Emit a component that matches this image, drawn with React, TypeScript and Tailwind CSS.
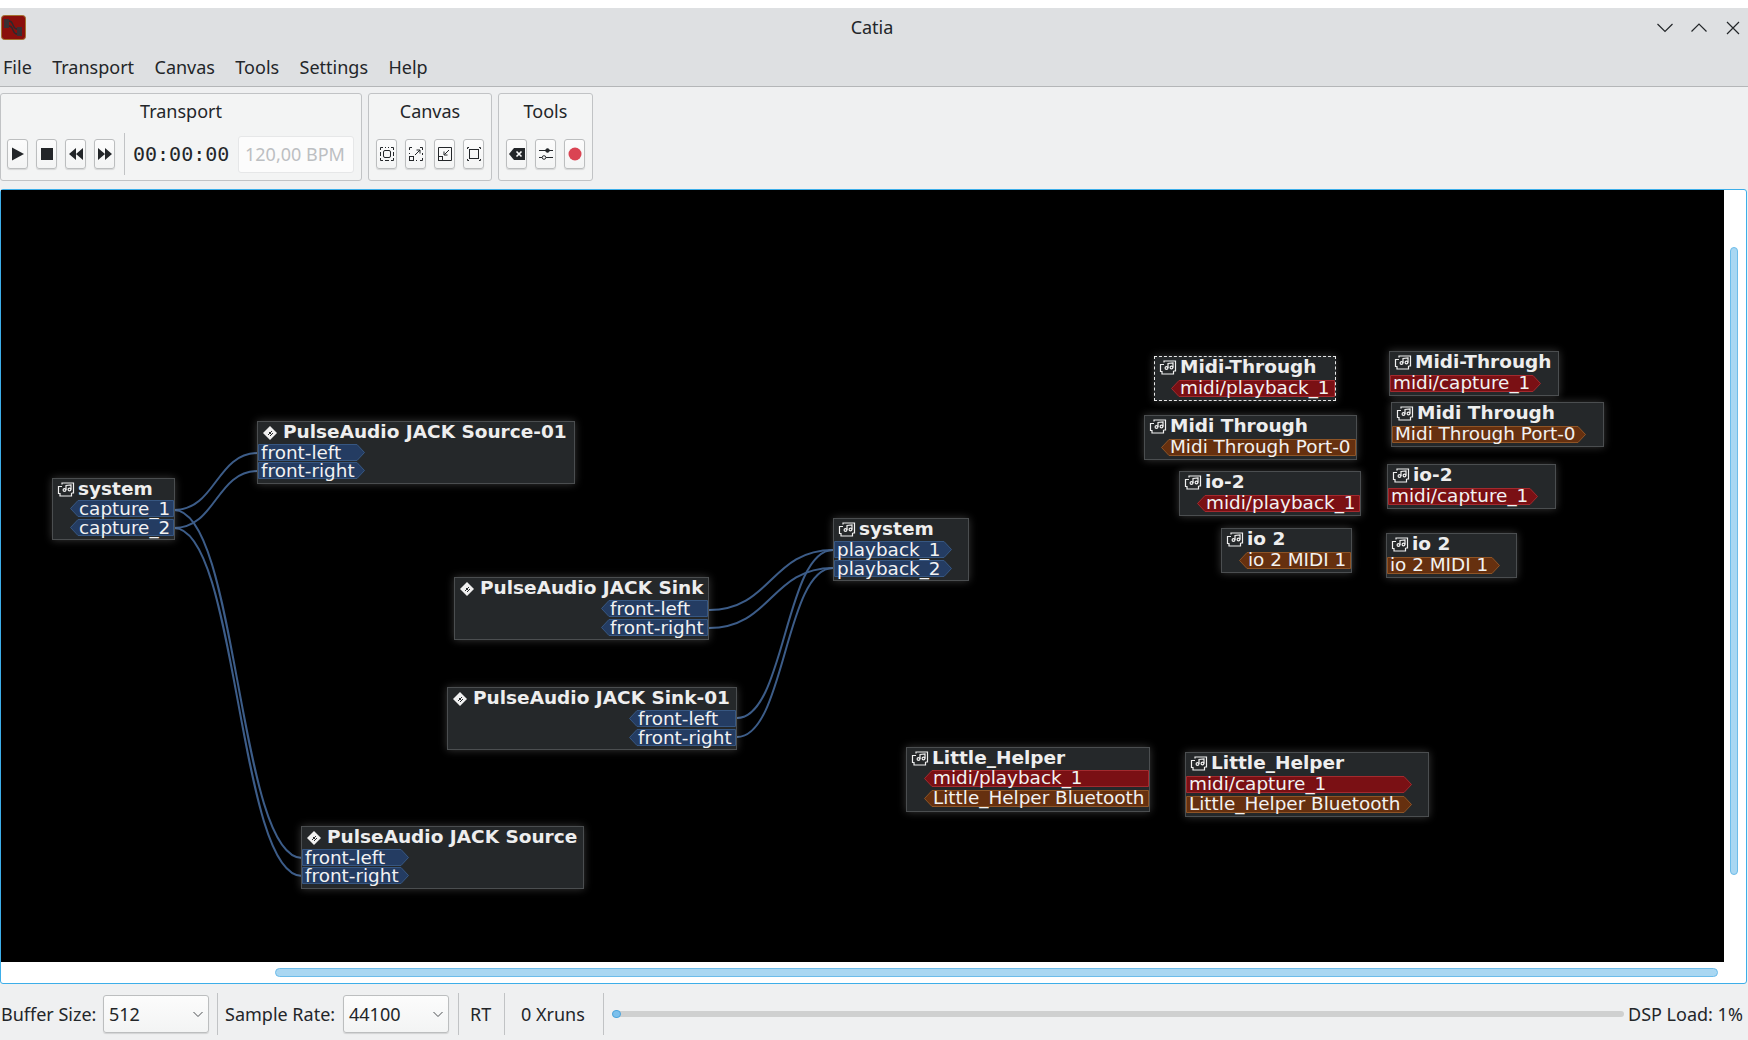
import type { ReactNode } from "react"

const ORIGIN_X = 1
const ORIGIN_Y = 190

type PortKind = "audio" | "midi" | "alsa"

type NodeData = {
  title: string
  x: number
  y: number
  w: number
  h: number
  icon: "card" | "app"
  side: "in" | "out"
  top: number
  gap: number
  selected?: boolean
  ports: { label: string; w: number; kind: PortKind }[]
}

const NODES: NodeData[] = [
  { title: "system", x: 52, y: 478, w: 123, h: 62, icon: "card", side: "out", top: 22, gap: 2, ports: [
    { label: "capture_1", w: 104, kind: "audio" },
    { label: "capture_2", w: 104, kind: "audio" },
  ] },
  { title: "PulseAudio JACK Source-01", x: 257, y: 421, w: 318, h: 63, icon: "app", side: "in", top: 23, gap: 1, ports: [
    { label: "front-left", w: 107, kind: "audio" },
    { label: "front-right", w: 107, kind: "audio" },
  ] },
  { title: "PulseAudio JACK Sink", x: 454, y: 577, w: 255, h: 63, icon: "app", side: "out", top: 23, gap: 2, ports: [
    { label: "front-left", w: 107, kind: "audio" },
    { label: "front-right", w: 107, kind: "audio" },
  ] },
  { title: "PulseAudio JACK Sink-01", x: 447, y: 687, w: 290, h: 63, icon: "app", side: "out", top: 23, gap: 2, ports: [
    { label: "front-left", w: 107, kind: "audio" },
    { label: "front-right", w: 107, kind: "audio" },
  ] },
  { title: "PulseAudio JACK Source", x: 301, y: 826, w: 283, h: 63, icon: "app", side: "in", top: 23, gap: 1, ports: [
    { label: "front-left", w: 107, kind: "audio" },
    { label: "front-right", w: 107, kind: "audio" },
  ] },
  { title: "system", x: 833, y: 518, w: 136, h: 63, icon: "card", side: "in", top: 23, gap: 2, ports: [
    { label: "playback_1", w: 118, kind: "audio" },
    { label: "playback_2", w: 118, kind: "audio" },
  ] },
  { title: "Little_Helper", x: 906, y: 747, w: 244, h: 65, icon: "card", side: "out", top: 23, gap: 3, ports: [
    { label: "midi/playback_1", w: 225, kind: "midi" },
    { label: "Little_Helper Bluetooth", w: 225, kind: "alsa" },
  ] },
  { title: "Little_Helper", x: 1185, y: 752, w: 244, h: 65, icon: "card", side: "in", top: 24, gap: 3, ports: [
    { label: "midi/capture_1", w: 226, kind: "midi" },
    { label: "Little_Helper Bluetooth", w: 226, kind: "alsa" },
  ] },
  { title: "Midi-Through", x: 1154, y: 356, w: 182, h: 45, icon: "card", side: "out", top: 24, gap: 0, selected: true, ports: [
    { label: "midi/playback_1", w: 164, kind: "midi" },
  ] },
  { title: "Midi-Through", x: 1389, y: 351, w: 170, h: 45, icon: "card", side: "in", top: 24, gap: 0, ports: [
    { label: "midi/capture_1", w: 151, kind: "midi" },
  ] },
  { title: "Midi Through", x: 1144, y: 415, w: 213, h: 45, icon: "card", side: "out", top: 24, gap: 0, ports: [
    { label: "Midi Through Port-0", w: 195, kind: "alsa" },
  ] },
  { title: "Midi Through", x: 1391, y: 402, w: 213, h: 45, icon: "card", side: "in", top: 24, gap: 0, ports: [
    { label: "Midi Through Port-0", w: 194, kind: "alsa" },
  ] },
  { title: "io-2", x: 1179, y: 471, w: 182, h: 45, icon: "card", side: "out", top: 24, gap: 0, ports: [
    { label: "midi/playback_1", w: 163, kind: "midi" },
  ] },
  { title: "io-2", x: 1387, y: 464, w: 169, h: 45, icon: "card", side: "in", top: 24, gap: 0, ports: [
    { label: "midi/capture_1", w: 150, kind: "midi" },
  ] },
  { title: "io 2", x: 1221, y: 528, w: 131, h: 45, icon: "card", side: "out", top: 24, gap: 0, ports: [
    { label: "io 2 MIDI 1", w: 112, kind: "alsa" },
  ] },
  { title: "io 2", x: 1386, y: 533, w: 131, h: 45, icon: "card", side: "in", top: 24, gap: 0, ports: [
    { label: "io 2 MIDI 1", w: 113, kind: "alsa" },
  ] },
]

const LINKS = [
  [174, 510, 258, 453],
  [174, 528, 258, 471],
  [174, 510, 302, 858],
  [174, 528, 302, 876],
  [709, 610, 833, 550],
  [709, 628, 833, 568],
  [737, 718, 833, 550],
  [737, 737, 833, 568],
]

const PORT_COLORS: Record<PortKind, { fill: string; stroke: string }> = {
  audio: { fill: "#243c62", stroke: "#375782" },
  midi: { fill: "#7a1014", stroke: "#a32a2e" },
  alsa: { fill: "#66300f", stroke: "#8e5426" },
}

function CardIcon() {
  return (
    <svg width="18" height="16" viewBox="0 0 18 16" fill="none" stroke="#f0f0f0" strokeWidth="1.2" className="shrink-0">
      <path d="M5 2.5V1h11.5v10H14.5" />
      <path d="M5 4.5H1.5v7H3v2.5h11.5v-3" />
      <circle cx="7.5" cy="8" r="1.4" />
      <circle cx="12.5" cy="7.5" r="1.4" />
      <path d="M9 8V3.5l5-.5v4.5" />
    </svg>
  )
}

function AppIcon() {
  return (
    <svg width="16" height="16" viewBox="0 0 16 16" className="shrink-0">
      <path d="M8 1l7 7-7 7-7-7z" fill="#f0f0f0" />
      <path d="M6 10l4-4M8 11l3-3M7 7l2 2" stroke="#26292b" strokeWidth="1" fill="none" />
    </svg>
  )
}

function Port({ label, w, kind, side }: { label: string; w: number; kind: PortKind; side: "in" | "out" }) {
  const c = PORT_COLORS[kind]
  const pts =
    side === "in"
      ? `0.5,0.5 ${w - 8},0.5 ${w - 0.5},8.5 ${w - 8},16.5 0.5,16.5`
      : `8,0.5 ${w - 0.5},0.5 ${w - 0.5},16.5 8,16.5 0.5,8.5`
  return (
    <div className="relative h-[17px] shrink-0" style={{ width: w }}>
      <svg width={w} height="17" className="absolute inset-0">
        <polygon points={pts} fill={c.fill} stroke={c.stroke} strokeWidth="1" />
      </svg>
      <span className={`absolute leading-[17px] whitespace-pre text-[18.4px] text-[#f2f2f2] font-['DejaVu_Sans',sans-serif] ${kind === "audio" ? "top-0" : "top-[-1px]"} ${side === "in" ? "left-[3px]" : "left-[9px]"}`}>
        {label}
      </span>
    </div>
  )
}

function CanvasNode({ node }: { node: NodeData }) {
  return (
    <div
      className={`absolute flex flex-col bg-[#25282a] shadow-[0_0_8px_rgba(255,255,255,0.22)] ${node.selected ? "border border-dashed border-[#e8e8e8]" : "border border-[#4b4e50]"}`}
      style={{ left: node.x - ORIGIN_X, top: node.y - ORIGIN_Y, width: node.w, height: node.h }}
    >
      <div className={`flex h-[20px] mt-[1px] items-center whitespace-pre pl-[4px] text-[18.5px] font-bold text-[#eeeeee] font-['DejaVu_Sans',sans-serif] ${node.icon === "app" ? "gap-[5px]" : "gap-[3px]"}`}>
        {node.icon === "card" ? <CardIcon /> : <AppIcon />}
        <span className="mb-[3px]">{node.title}</span>
      </div>
      <div
        className={`absolute left-0 right-0 flex flex-col ${node.side === "in" ? "items-start" : "items-end"}`}
        style={{ top: node.top - 1, gap: node.gap }}
      >
        {node.ports.map((p) => (
          <Port key={p.label} label={p.label} w={p.w} kind={p.kind} side={node.side} />
        ))}
      </div>
    </div>
  )
}

function ToolButton({ children }: { children: ReactNode }) {
  return (
    <button className="flex h-[30px] w-[21px] items-center justify-center rounded-[3px] border border-[#bcbebf] bg-gradient-to-b from-[#fcfcfc] to-[#f3f4f4] shadow-[0_1px_1px_rgba(0,0,0,0.12)]">
      {children}
    </button>
  )
}

function Group({ title, width, children }: { title: string; width: string; children: ReactNode }) {
  return (
    <div className={`flex h-[88px] flex-col rounded-[3px] border border-[#c1c3c5] bg-[#f3f4f4] ${width}`}>
      <div className="mt-[4px] h-[26px] text-center text-[18px] leading-[26px] text-[#232629]">{title}</div>
      <div className="mt-[9px] flex h-[42px] items-center">{children}</div>
    </div>
  )
}

function Combo({ value, width }: { value: string; width: string }) {
  return (
    <div className={`flex h-[38px] items-center justify-between rounded-[3px] border border-[#bcbebf] bg-gradient-to-b from-[#fcfcfc] to-[#f3f4f4] pl-[5px] pr-[2px] shadow-[0_1px_1px_rgba(0,0,0,0.12)] ${width}`}>
      <span>{value}</span>
      <svg width="16" height="16" viewBox="0 0 16 16" fill="none" stroke="#4d5053" strokeWidth="1">
        <path d="M3.5 6l4.5 4.5L12.5 6" />
      </svg>
    </div>
  )
}

function Sep({ className }: { className: string }) {
  return <div className={`h-[42px] w-px bg-[#c1c3c5] ${className}`} />
}

const ICON = "#232629"

export default function App() {
  return (
    <div className="flex h-[1040px] w-[1748px] flex-col overflow-hidden bg-[#eff0f1] font-['Noto_Sans',sans-serif] text-[#232629]">
      <div className="h-[8px] bg-white" />

      {/* title bar */}
      <div className="flex h-[39px] items-center justify-between bg-[#dee0e2] pl-[1px] pr-[8px]">
        <svg width="25" height="25" viewBox="0 0 25 25">
          <rect x="0.5" y="0.5" width="24" height="24" rx="3" fill="#8a0f0c" stroke="#a3702f" strokeWidth="1" />
          <rect x="3" y="4" width="5" height="9" fill="#3a2f33" />
          <rect x="16" y="12" width="5" height="9" fill="#3a2f33" />
          <path d="M8 6c5 0 3 8 8 8M8 11c5 0 3 8 8 8" stroke="#2a2a2e" strokeWidth="1.4" fill="none" />
        </svg>
        <span className="absolute left-0 w-[1744px] text-center text-[18px]">Catia</span>
        <div className="flex items-center gap-[18px]">
          <svg width="16" height="16" viewBox="0 0 16 16" fill="none" stroke={ICON} strokeWidth="1.2"><path d="M0.5 4L8 11.5 15.5 4" /></svg>
          <svg width="16" height="16" viewBox="0 0 16 16" fill="none" stroke={ICON} strokeWidth="1.2"><path d="M0.5 11.5L8 4l7.5 7.5" /></svg>
          <svg width="14" height="14" viewBox="0 0 14 14" fill="none" stroke={ICON} strokeWidth="1.2" className="ml-[1px]"><path d="M1 1l12 12M13 1L1 13" /></svg>
        </div>
      </div>

      {/* menu bar */}
      <div className="flex h-[40px] items-center gap-[20.4px] border-b border-[#b4b6b8] bg-[#dee0e2] pl-[3px] pt-[1px] text-[18px]">
        <span>File</span>
        <span>Transport</span>
        <span>Canvas</span>
        <span>Tools</span>
        <span>Settings</span>
        <span>Help</span>
      </div>

      {/* toolbars */}
      <div className="flex h-[102px] gap-[6px] pt-[6px]">
        <Group title="Transport" width="w-[362px]">
          <div className="ml-[6px] flex gap-[8px]">
            <ToolButton>
              <svg width="16" height="16" viewBox="0 0 16 16" fill={ICON}><path d="M2 1.5l12 6.5-12 6.5z" /></svg>
            </ToolButton>
            <ToolButton>
              <svg width="16" height="16" viewBox="0 0 16 16" fill={ICON}><rect x="2" y="2" width="12" height="12" /></svg>
            </ToolButton>
            <ToolButton>
              <svg width="16" height="16" viewBox="0 0 16 16" fill={ICON}><path d="M8 2v12L1 8zM15 2v12L8 8z" /></svg>
            </ToolButton>
            <ToolButton>
              <svg width="16" height="16" viewBox="0 0 16 16" fill={ICON}><path d="M1 2v12l7-6zM8 2v12l7-6z" /></svg>
            </ToolButton>
          </div>
          <div className="ml-[9px] h-[42px] w-px bg-[#c1c3c5]" />
          <span className="ml-[8px] w-[96px] font-['DejaVu_Sans_Mono',monospace] text-[20px]">00:00:00</span>
          <div className="ml-[9px] flex h-[37px] w-[116px] items-center rounded-[3px] border border-[#e6e7e8] bg-[#fcfcfc] pl-[6px] text-[18px] text-[#bcbfc2]">
            120,00 BPM
          </div>
        </Group>

        <Group title="Canvas" width="w-[124px]">
          <div className="ml-[7px] flex gap-[8px]">
            <ToolButton>
              <svg width="14" height="14" viewBox="0 0 14 14" fill="none" stroke={ICON} strokeWidth="1">
                <path d="M.5 3V.5H3M5 .5h1M8 .5h1M11 .5h2.5V3M13.5 5v4M13.5 11v2.5H11M9 13.5H5M3 13.5H.5V11M.5 9V5" />
                <rect x="3.5" y="3.5" width="7" height="7" rx="1.5" />
              </svg>
            </ToolButton>
            <ToolButton>
              <svg width="14" height="14" viewBox="0 0 14 14" fill="none" stroke={ICON} strokeWidth="1">
                <path d="M.5 3V.5H3M11 .5h2.5V3M13.5 6v2M13.5 11v2.5H11M8 13.5H7M.5 7V6" />
                <rect x=".5" y="9.5" width="4" height="4" />
                <path d="M6 8l5-5M7.5 3H11v3.5" />
              </svg>
            </ToolButton>
            <ToolButton>
              <svg width="14" height="14" viewBox="0 0 14 14" fill="none" stroke={ICON} strokeWidth="1">
                <path d="M.5 9V.5h13v13H5" />
                <rect x=".5" y="9.5" width="4" height="4" />
                <path d="M11 3L6.5 7.5M6 4.5V8h3.5" />
              </svg>
            </ToolButton>
            <ToolButton>
              <svg width="14" height="14" viewBox="0 0 14 14" fill="none" stroke={ICON} strokeWidth="1">
                <rect x="2.5" y="2.5" width="9" height="9" />
                <path d="M.5 2V.5H2M12 .5h1.5V2M13.5 12v1.5H12M2 13.5H.5V12" />
              </svg>
            </ToolButton>
          </div>
        </Group>

        <Group title="Tools" width="w-[95px]">
          <div className="ml-[7px] flex gap-[8px]">
            <ToolButton>
              <svg width="16" height="14" viewBox="0 0 16 14">
                <path d="M5 1h11v12H5L0 7z" fill={ICON} />
                <path d="M7.5 4.5l5 5M12.5 4.5l-5 5" stroke="#fcfcfc" strokeWidth="1.6" />
              </svg>
            </ToolButton>
            <ToolButton>
              <svg width="14" height="14" viewBox="0 0 14 14" fill="none" stroke={ICON} strokeWidth="1">
                <path d="M0 3.5h14M0 10.5h3M7 10.5h7" />
                <circle cx="8.5" cy="3.5" r="1.8" fill={ICON} />
                <circle cx="5" cy="10.5" r="1.8" />
              </svg>
            </ToolButton>
            <ToolButton>
              <svg width="14" height="14" viewBox="0 0 14 14"><circle cx="7" cy="7" r="6.5" fill="#da4453" /></svg>
            </ToolButton>
          </div>
        </Group>
      </div>

      {/* patchbay frame */}
      <div className="ml-0 flex h-[795px] w-[1747px] flex-col rounded-[3px] border border-[#3daee9] bg-white">
        <div className="flex h-[772px]">
          <div className="relative h-full w-[1723px] overflow-hidden bg-black">
            <svg width="1723" height="772" className="absolute inset-0" fill="none" stroke="#3c5c88" strokeWidth="2">
              {LINKS.map(([x1, y1, x2, y2], i) => {
                const d = Math.abs(x2 - x1) / 2
                const ax = x1 - ORIGIN_X
                const ay = y1 - ORIGIN_Y
                const bx = x2 - ORIGIN_X
                const by = y2 - ORIGIN_Y
                return <path key={i} d={`M${ax} ${ay}C${ax + d} ${ay} ${bx - d} ${by} ${bx} ${by}`} />
              })}
            </svg>
            {NODES.map((n) => (
              <CanvasNode key={`${n.title}-${n.x}`} node={n} />
            ))}
          </div>
          <div className="flex-1 pl-[6px] pt-[57px]">
            <div className="h-[628px] w-[8px] rounded-full border border-[#6cbcea] bg-[#a9d7f2]" />
          </div>
        </div>
        <div className="pl-[274px] pt-[6px]">
          <div className="h-[9px] w-[1443px] rounded-full border border-[#6cbcea] bg-[#a9d7f2]" />
        </div>
      </div>

      {/* status bar */}
      <div className="flex h-[56px] items-center pl-[1px] pt-[4px] text-[18px]">
        <span className="w-[102px]">Buffer Size:</span>
        <Combo value="512" width="w-[106px]" />
        <Sep className="ml-[8px]" />
        <span className="ml-[7px] w-[118px]">Sample Rate:</span>
        <Combo value="44100" width="w-[106px]" />
        <Sep className="ml-[9px]" />
        <span className="ml-[11px] w-[34px]">RT</span>
        <Sep className="" />
        <span className="ml-[16px] w-[82px]">0 Xruns</span>
        <Sep className="" />
        <div className="relative ml-[8px] h-[6px] w-[1012px] rounded-full bg-[#cfd0d0]">
          <div className="absolute left-0 top-[-1px] h-[8px] w-[9px] rounded-full border border-[#4da5dc] bg-[#7cc0ec]" />
        </div>
        <span className="ml-[4px] whitespace-nowrap">DSP Load: 1%</span>
      </div>
    </div>
  )
}
